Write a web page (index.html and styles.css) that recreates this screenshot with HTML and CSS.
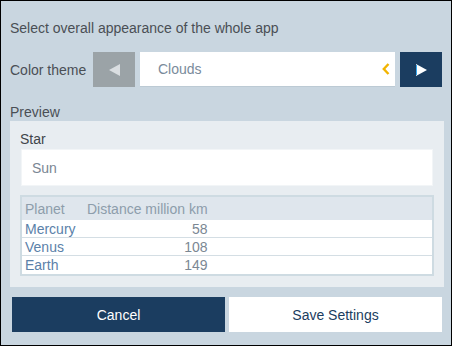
FILE: index.html
```html
<!DOCTYPE html>
<html lang="en">
<head>
    <meta charset="UTF-8">
    <title>Appearance Settings</title>
    <link rel="stylesheet" href="styles.css">
</head>
<body>
    <div class="app">
        <div class="intro">Select overall appearance of the whole app</div>

        <div class="theme-row">
            <span class="theme-label">Color theme</span>
            <button class="nav-btn prev" disabled>
                <svg width="11" height="12" viewBox="0 0 11 12"><polygon points="11,0 0,6 11,12" fill="#dadee1"/></svg>
            </button>
            <div class="theme-field">
                <span>Clouds</span>
                <svg class="chevron" width="8" height="12" viewBox="0 0 8 12"><polyline points="6.5,1 1.8,6 6.5,11" fill="none" stroke="#f2b400" stroke-width="2.4"/></svg>
            </div>
            <button class="nav-btn next">
                <svg width="11" height="12" viewBox="0 0 11 12"><polygon points="0,0 11,6 0,12" fill="#ffffff"/><rect x="0" y="1" width="1" height="10" fill="#35a8f0"/></svg>
            </button>
        </div>

        <div class="preview-label">Preview</div>
        <div class="preview">
            <div class="field-label">Star</div>
            <div class="field">Sun</div>

            <div class="grid-wrap">
                <table class="grid">
                    <thead>
                        <tr><th class="c-name">Planet</th><th class="c-dist">Distance million km</th><th></th></tr>
                    </thead>
                    <tbody>
                        <tr><td class="c-name">Mercury</td><td class="c-dist">58</td><td></td></tr>
                        <tr><td class="c-name">Venus</td><td class="c-dist">108</td><td></td></tr>
                        <tr><td class="c-name">Earth</td><td class="c-dist">149</td><td></td></tr>
                    </tbody>
                </table>
            </div>
        </div>

        <div class="actions">
            <button class="btn btn-cancel">Cancel</button>
            <button class="btn btn-save">Save Settings</button>
        </div>
    </div>
</body>
</html>
```

FILE: styles.css
```css
html {
    background-color: #000000;
}
body {
    margin: 0;
    font-family: "Liberation Sans", Arial, sans-serif;
    font-size: 14px;
    line-height: 16px;
    color: #4a4f55;
}
.app {
    margin: 1px;
    width: 450px;
    height: 344px;
    box-sizing: border-box;
    padding: 19px 7px 0 9px;
    background-color: #c9d6e0;
}
.theme-row {
    display: flex;
    align-items: center;
    gap: 5px;
    height: 35px;
    margin-top: 16px;
    padding-right: 2px;
}
.theme-label {
    width: 78px;
}
.nav-btn {
    width: 42px;
    height: 35px;
    border: none;
    padding: 0;
    display: flex;
    align-items: center;
    justify-content: center;
}
.nav-btn.prev {
    background-color: #9ba3a7;
}
.nav-btn.next {
    background-color: #1b3d60;
}
.theme-field {
    flex: 1;
    height: 35px;
    box-sizing: border-box;
    display: flex;
    align-items: center;
    justify-content: space-between;
    padding: 0 5px 0 18px;
    background-color: #ffffff;
    border-bottom: 1px solid #bccad4;
    color: #7a8b9b;
}
.preview-label {
    margin-top: 17px;
}
.preview {
    margin-top: 1px;
    height: 166px;
    box-sizing: border-box;
    padding: 10px 10px 0 10px;
    background-color: #e8edf1;
}
.field-label {
    color: #3f444a;
}
.field {
    margin: 2px 1px 0 1px;
    height: 37px;
    box-sizing: border-box;
    display: flex;
    align-items: center;
    padding-left: 10px;
    background-color: #ffffff;
    border: 1px solid #f2f5f7;
    color: #7a8693;
}
.grid-wrap {
    margin-top: 9px;
    border: 2px solid #cedbe2;
}
.grid {
    width: 100%;
    border-collapse: collapse;
    background-color: #ffffff;
}
.grid th {
    height: 23px;
    padding: 0 3px;
    text-align: left;
    font-weight: normal;
    white-space: nowrap;
    color: #8d9dab;
    background-color: #dfe6ed;
}
.grid td {
    height: 17px;
    padding: 0 3px;
    border-bottom: 1px solid #d4dee4;
    color: #7b8793;
}
.grid tr:last-child td {
    border-bottom: none;
    height: 18px;
}
.grid .c-name {
    width: 56px;
}
.grid td.c-name {
    color: #5b81a9;
}
.grid .c-dist {
    width: 119px;
}
.grid td.c-dist {
    text-align: right;
}
.actions {
    display: flex;
    gap: 4px;
    margin-top: 10px;
    padding: 0 2px;
}
.btn {
    flex: 1;
    height: 35px;
    border: none;
    font-family: inherit;
    font-size: 14px;
}
.btn-cancel {
    background-color: #1b3d60;
    color: #ffffff;
}
.btn-save {
    background-color: #ffffff;
    color: #1b3d60;
}
```
